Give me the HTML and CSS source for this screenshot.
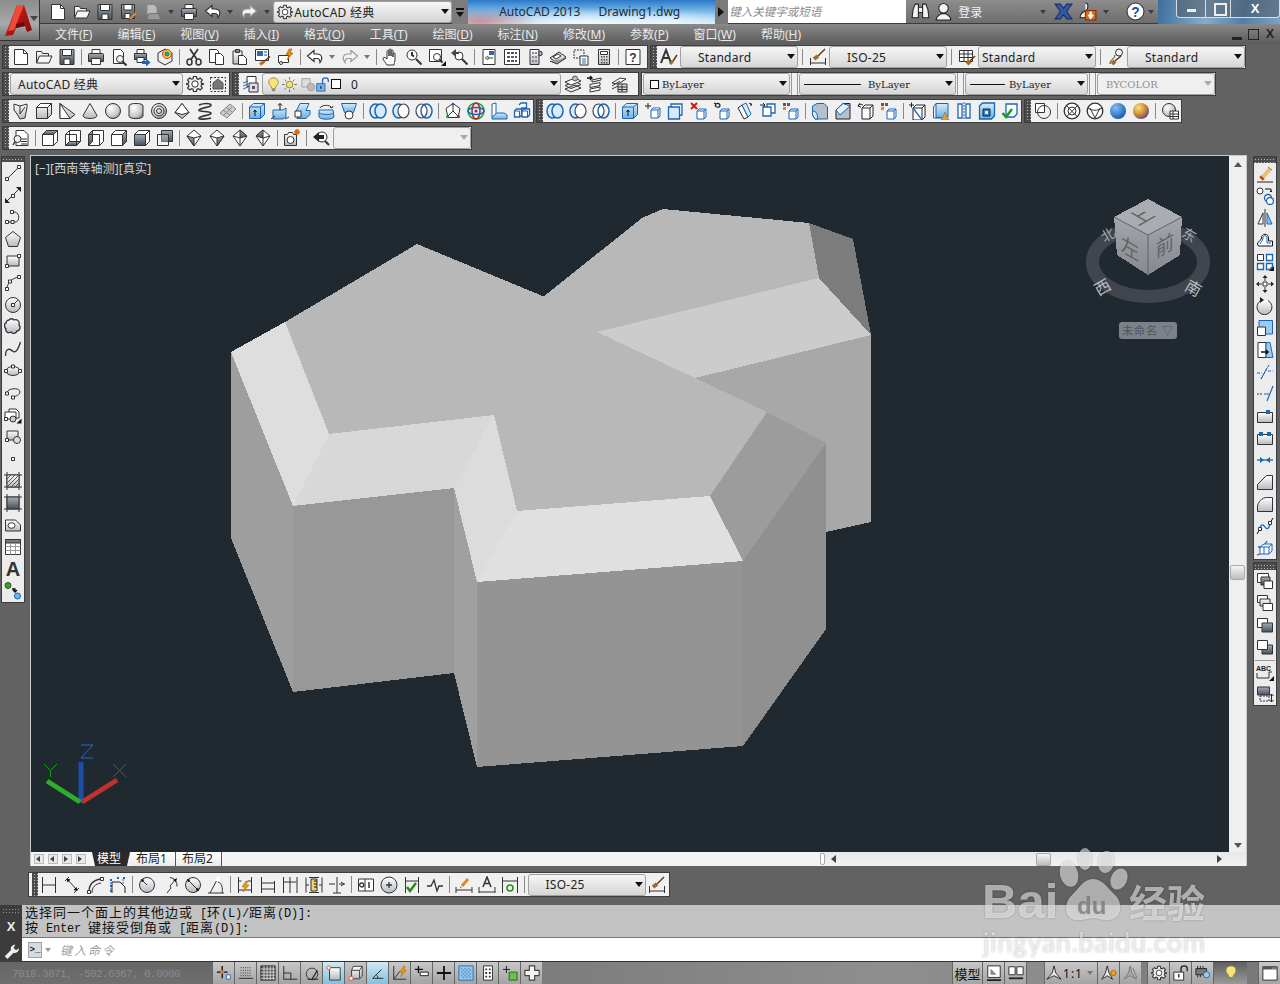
FILE: index.html
```html
<!DOCTYPE html>
<html lang="zh-CN">
<head>
    <meta charset="UTF-8">
    <title>AutoCAD 2013 - Drawing1.dwg</title>
    <link rel="stylesheet" href="styles.css">
</head>
<body>
<svg class="sprite" width="0" height="0">
    <defs>
        <linearGradient id="gl" x1="0" y1="0" x2="0" y2="1"><stop offset="0" stop-color="#fff"/><stop offset="1" stop-color="#b4bac1"/></linearGradient>
        <linearGradient id="gd" x1="0" y1="0" x2="0" y2="1"><stop offset="0" stop-color="#a5acb4"/><stop offset="1" stop-color="#465059"/></linearGradient>
        <linearGradient id="gb" x1="0" y1="0" x2="0" y2="1"><stop offset="0" stop-color="#d5ecfb"/><stop offset="1" stop-color="#6fb0e0"/></linearGradient>
        <linearGradient id="gcube" x1="0" y1="0" x2="0" y2="1"><stop offset="0" stop-color="#a3a7ab"/><stop offset="1" stop-color="#85898d"/></linearGradient>
        <radialGradient id="gs" cx=".35" cy=".3" r=".8"><stop offset="0" stop-color="#fff"/><stop offset=".7" stop-color="#c4c8cc"/><stop offset="1" stop-color="#7d8489"/></radialGradient>
        <radialGradient id="gblue" cx=".35" cy=".3" r=".8"><stop offset="0" stop-color="#7fc0f5"/><stop offset="1" stop-color="#0c55a5"/></radialGradient>
        <radialGradient id="ggold" cx=".35" cy=".3" r=".8"><stop offset="0" stop-color="#ffe27a"/><stop offset=".55" stop-color="#c98a30"/><stop offset="1" stop-color="#4a3aa0"/></radialGradient>
        <linearGradient id="gred" x1="0" y1="0" x2="1" y2="1"><stop offset="0" stop-color="#e02020"/><stop offset="1" stop-color="#7d0c0c"/></linearGradient>

        <!-- file / edit -->
        <symbol id="new" viewBox="0 0 18 18"><path fill="#fff" d="M2.5 1.5h9l4 4v11h-13z"/><path d="M11.5 1.5v4h4"/></symbol>
        <symbol id="open" viewBox="0 0 18 18"><path fill="url(#gl)" d="M1.5 15V3.5h5l1 2h6V8"/><path fill="#f5f5f5" d="M1.5 15l3-7h12.5l-3 7z"/></symbol>
        <symbol id="save" viewBox="0 0 18 18"><path fill="url(#gd)" d="M2 1.5h14v15H2z"/><path fill="#fff" d="M4.5 1.5h9v6h-9zM6 11h6v5.5H6z"/></symbol>
        <symbol id="saveas" viewBox="0 0 18 18"><path fill="url(#gd)" d="M1.5 1.5h13v14h-13z"/><path fill="#fff" d="M4 1.5h8v5.500H4zM5 10.500h5v5H5z"/><path stroke="#e08a20" stroke-width="2.400" d="M10 16l6-6"/><path stroke="#333" d="M9 17.500l1.500-1"/></symbol>
        <symbol id="plot" viewBox="0 0 18 18"><path fill="#bbb" stroke="#888" d="M3 1.500h7l3 3v7H3z"/><path fill="#999" stroke="#777" d="M3 16.500l2-6h9l3 6z"/></symbol>
        <symbol id="print" viewBox="0 0 18 18"><path fill="#fff" d="M5 1.500h8v5H5z"/><path fill="url(#gd)" d="M1.500 6.500c0-1 .5-1 1-1h13c.5 0 1 0 1 1v7h-15z"/><path fill="#fff" d="M4.500 10.500h9v6h-9z"/></symbol>
        <symbol id="preview" viewBox="0 0 18 18"><path fill="#fff" d="M3.500 1.500h7l3 3v11h-10z"/><circle cx="10" cy="11" r="3.500" fill="#eaf4fb"/><path stroke-width="2" d="M12.500 13.500l4 4"/></symbol>
        <symbol id="publish" viewBox="0 0 18 18"><path fill="#fff" d="M4 1.500h7v4H4z"/><path fill="url(#gd)" d="M1.500 5.500h12v6h-12z"/><path fill="#fff" d="M4 9.500h7v5H4z"/><path fill="#1a66b5" stroke="none" d="M9 13h4v-2.500l4.500 4-4.500 4V16H9z"/></symbol>
        <symbol id="p3d" viewBox="0 0 18 18"><path fill="#eee" d="M9 1l7 4v8l-7 4-7-4V5z"/><circle cx="11" cy="6" r="4.500" fill="#f5d040" stroke="#e03820"/><circle cx="11" cy="6" r="2" fill="#3090d8" stroke="#148a30"/></symbol>
        <symbol id="cut" viewBox="0 0 18 18"><ellipse cx="4.500" cy="14" rx="2.500" ry="3" stroke-width="1.500"/><ellipse cx="13.500" cy="14" rx="2.500" ry="3" stroke-width="1.500"/><path stroke-width="1.700" d="M6 11.500L13 1M12 11.500L5 1"/></symbol>
        <symbol id="copy" viewBox="0 0 18 18"><path fill="#fff" d="M1.500 1.500h7l2 2v11h-9z"/><path fill="#fff" d="M7.500 5.500h5l3 3v8h-8z"/></symbol>
        <symbol id="paste" viewBox="0 0 18 18"><path fill="url(#gl)" d="M2 3h9v13H2z"/><path fill="#888" d="M4.500 1.500h4v3h-4z"/><path fill="#fff" d="M7.500 7.500h5l3 3v6h-8z"/></symbol>
        <symbol id="match" viewBox="0 0 18 18"><path fill="#fff" stroke="#234" d="M1.500 1.500h13v11h-13z"/><path fill="#3a66a8" stroke="none" d="M3 3h6v5H3z"/><path fill="#8ab" stroke="none" d="M10 3h3v2h-3zM10 6h3v2h-3z"/><path stroke="#c56a18" stroke-width="3" d="M6 16.500l4-3"/><path stroke="#6a3a10" stroke-width="1.500" d="M10 13.500l6-5"/></symbol>
        <symbol id="block" viewBox="0 0 18 18"><path fill="#fff" d="M1.500 7.500h10v7h-10z"/><circle cx="4" cy="15" r="1.500" fill="#fff"/><path fill="#e88a10" stroke="#a85a00" stroke-width=".6" d="M12 1l-3 6h3l-2 5 6-7h-3l2-4z"/></symbol>
        <symbol id="undo" viewBox="0 0 18 18"><path fill="#fff" stroke-width="1.200" d="M8 2.500L1.500 8 8 13.500v-3h3c2.500 0 3 1.500 3 4 2.500-2.500 3-8.500-3-8.500H8z"/></symbol>
        <symbol id="redo" viewBox="0 0 18 18"><path fill="#f4f4f4" stroke="#999" stroke-width="1.200" d="M10 2.500L16.500 8 10 13.500v-3H7c-2.500 0-3 1.500-3 4-2.500-2.500-3-8.500 3-8.500h3z"/></symbol>
        <symbol id="pan" viewBox="0 0 18 18"><path fill="#fff" d="M5 17c-1-2-4-5-4-6.500S3 9 5 11V3.500c0-1.500 2-1.500 2 0V8 2c0-1.500 2-1.500 2 0v6-5c0-1.500 2-1.500 2 0v6-3c0-1.500 2-1.500 2 0v5c0 3-1 4-1 6z"/></symbol>
        <symbol id="zr" viewBox="0 0 18 18"><circle cx="7" cy="7" r="5" fill="#fff"/><path stroke-width="2" d="M11 11l5.500 5.500M7 4v3l2 1.500"/></symbol>
        <symbol id="zw" viewBox="0 0 18 18"><path fill="#fff" d="M1.500 1.500h12v12h-12z"/><circle cx="9" cy="9" r="3.500" fill="#fff"/><path stroke-width="2" d="M11.500 11.500l3 3"/><path fill="#111" stroke="none" d="M18 18h-5l5-5z"/></symbol>
        <symbol id="zp" viewBox="0 0 18 18"><circle cx="8" cy="8" r="4" fill="#fff"/><path stroke-width="2" d="M11 11l5.500 5.500"/><path fill="#445" stroke="none" d="M0 5l5-4v3h3v2H5v3z"/></symbol>
        <symbol id="props" viewBox="0 0 18 18"><path fill="#fff" d="M3 1.500h12v15H3z"/><path fill="#3a66a8" stroke="none" d="M9 3h5v4H9z"/><path fill="#fff" stroke-width=".7" d="M5 10l3-2v4z"/><path d="M8 10h5"/></symbol>
        <symbol id="dc" viewBox="0 0 18 18"><path fill="#fff" d="M1.500 1.500h15v15h-15z"/><path fill="#555" stroke="none" d="M4 4h3v2H4zM8 4h3v2H8zM12 4h2v2h-2zM4 8h3v2H4zM12 8h2v2h-2zM4 12h3v2H4zM8 12h3v2H8zM12 12h2v2h-2z"/><path fill="#2f6eb5" stroke="none" d="M8 8h3v2H8z"/></symbol>
        <symbol id="pal" viewBox="0 0 18 18"><path fill="url(#gl)" d="M4 1.500h9v15H4z"/><path fill="#889" stroke="none" d="M6 4h2v2H6zM9 4h2v2H9zM6 8h2v2H6zM9 8h2v2H9zM6 12h2v2H6zM9 12h2v2H9z"/><path fill="#bbb" d="M13 3l3 1v3l-3 1z"/></symbol>
        <symbol id="sheet" viewBox="0 0 18 18"><path fill="#ddd" d="M1 10l9-6 7 5-9 6z"/><path fill="#999" d="M1 13l7 3 9-6"/><path fill="#fff" d="M4 9l5-3 3 2-5 3z"/></symbol>
        <symbol id="markup" viewBox="0 0 18 18"><path fill="#eee" stroke-dasharray="2 1" d="M2 2h10v8H2z"/><path fill="#fff" d="M8 8h8v9H8z"/><path stroke="#2f6eb5" d="M10 11h4M10 13h4M10 15h4"/></symbol>
        <symbol id="calc" viewBox="0 0 18 18"><path fill="url(#gl)" d="M3.500 1.500h11v15h-11z"/><path fill="#fff" d="M5.500 3.500h7v3h-7z"/><path fill="#555" stroke="none" d="M6 8h1.500v1.500H6zM8.500 8H10v1.500H8.500zM11 8h1.500v1.500H11zM6 11h1.500v1.500H6zM8.500 11H10v1.500H8.500zM11 11h1.500v1.500H11zM6 14h1.500v1.500H6zM8.500 14H10v1.500H8.500zM11 14h1.500v1.500H11z"/></symbol>
        <symbol id="help" viewBox="0 0 18 18"><path fill="#fff" d="M2 1.500h14v15H2z"/><text x="9" y="14" font-size="12" font-family="Liberation Sans" font-weight="700" text-anchor="middle" fill="#333" stroke="none">?</text></symbol>

        <!-- style toolbar -->
        <symbol id="txtst" viewBox="0 0 18 18"><path stroke-width="2" d="M1 15L6 2l5 13M3 10h6"/><path stroke="#a86a20" stroke-width="3" d="M10 16l3-3"/><path stroke="#5a3a10" stroke-width="1.500" d="M13 13l4-6"/></symbol>
        <symbol id="dimst" viewBox="0 0 18 18"><path d="M1.500 10v7M16.500 10v7M1.500 15h15"/><path stroke="#a86a20" stroke-width="4" d="M5 11l4-3"/><path stroke="#5a3a10" stroke-width="1.500" d="M9 8l7-7"/></symbol>
        <symbol id="tabst" viewBox="0 0 18 18"><path fill="#fff" d="M1.500 2.500h13v11h-13z"/><path d="M1.500 6h13M1.500 9.500h13M6 2.500v11M10 2.500v11"/><path stroke="#a86a20" stroke-width="4" d="M9 16l3-3"/><path stroke="#5a3a10" stroke-width="1.500" d="M12 13l5-5"/></symbol>
        <symbol id="mlst" viewBox="0 0 18 18"><path d="M3 16c0-5 4-4 5-9"/><circle cx="12" cy="4.500" r="3.500"/><path stroke="#a86a20" stroke-width="4" d="M5 16l3-3"/><path stroke="#5a3a10" stroke-width="1.500" d="M8 13l6-5"/></symbol>
        <symbol id="gear" viewBox="0 0 18 18"><circle cx="9" cy="9" r="3.200" fill="#fff"/><path stroke-width="1.200" fill="#eee" d="M7.500 1.500h3l.4 2.200 1.500.6 1.800-1.300 2.100 2.100-1.300 1.800.6 1.500 2.200.4v.4l-2.200.4-.6 1.500 1.300 1.800-2.100 2.100-1.800-1.300-1.500.6-.4 2.200h-3l-.4-2.200-1.500-.6-1.800 1.300L1.600 13l1.300-1.800-.6-1.500L.1 9.300v-.6l2.200-.4.6-1.500L1.600 5l2.100-2.100 1.800 1.300L7 3.700z"/><circle cx="9" cy="9" r="3.200" fill="#fff"/></symbol>
        <symbol id="wsp" viewBox="0 0 18 18"><path stroke-dasharray="2 1.500" d="M1.500 2.500h15v14h-15z"/><path fill="#777" stroke="#555" d="M4 14V8l5-4 5 4v6z"/></symbol>
        <symbol id="layers" viewBox="0 0 18 18"><path fill="#fff" d="M5 1.500h9v10H5z"/><path stroke="#2f6eb5" d="M1 8l5-2M1 11l5-2M1 14l5-2"/><path fill="#dde" d="M7 8h9v9H7z"/><path fill="#555" stroke="none" d="M10 11h3v3h-3z"/></symbol>
        <symbol id="lay2" viewBox="0 0 18 18"><path fill="#eee" d="M1 14l6 3 10-4-6-3zM1 10.500l6 3 10-4-6-3z"/><path fill="#fff" d="M1 7l6 3 10-4-6-3z"/><circle cx="11" cy="3.500" r="2.500" fill="#9cc7ea" stroke="#555"/></symbol>
        <symbol id="lay3" viewBox="0 0 18 18"><path fill="#fff" d="M3 17l10-2v-3L3 14zM3 12.500l10-2v-3l-10 2z"/><path fill="#fff" d="M5 7l9-2V3L5 5z"/><path stroke="#111" stroke-width="1.400" d="M0 3h4M3 1l2 2-2 2"/></symbol>
        <symbol id="lay4" viewBox="0 0 18 18"><path fill="#fff" d="M2 8l8-5 6 1-8 5zM2 11l8-5M2 14l6-3"/><path fill="#ddd" d="M8 9h9v8H8z"/><path d="M8 12h9M8 14.500h9M12 9v8"/></symbol>

        <!-- solids -->
        <symbol id="polys" viewBox="0 0 18 18"><path fill="url(#gl)" d="M2 2l6 2 7-2v3l-2 11-5 1-3-5L2 8z"/><path d="M8 4v8M13 5l-5 7"/></symbol>
        <symbol id="box" viewBox="0 0 18 18"><path fill="url(#gl)" d="M1.500 5.500l4-4h11v11l-4 4h-11z"/><path fill="#fff" d="M1.500 5.500h11l4-4h-11zM12.500 5.500v11"/></symbol>
        <symbol id="wedge" viewBox="0 0 18 18"><path fill="url(#gl)" d="M2 1.500v15h10l5-4z"/><path fill="#fff" d="M2 1.500l10 15H2z"/></symbol>
        <symbol id="cone" viewBox="0 0 18 18"><path fill="url(#gl)" d="M9 1.500l7 12c0 4-14 4-14 0z"/></symbol>
        <symbol id="sphere" viewBox="0 0 18 18"><circle cx="9" cy="9" r="7.500" fill="url(#gs)"/></symbol>
        <symbol id="cyl" viewBox="0 0 18 18"><path fill="url(#gs)" d="M2 4c0-3.500 14-3.500 14 0v10c0 3.500-14 3.500-14 0z"/></symbol>
        <symbol id="torus" viewBox="0 0 18 18"><circle cx="9" cy="9" r="7.500" fill="url(#gs)"/><circle cx="9" cy="9" r="5"/><circle cx="9" cy="9" r="2.500" fill="#ddd"/></symbol>
        <symbol id="pyr" viewBox="0 0 18 18"><path fill="url(#gl)" d="M9 1.500l7 9-7 6-7-6z"/><path fill="#fff" d="M9 1.500l-7 9 7 2 7-2z"/></symbol>
        <symbol id="helix" viewBox="0 0 18 18"><path stroke-width="1.600" d="M3 3c5-2 11-2 12 0s-11 3-12 5 11 1 12 3-11 3-12 5 9 1 12 0"/></symbol>
        <symbol id="planar" viewBox="0 0 18 18"><path fill="#ccc" stroke="#888" d="M1 11l10-9 6 5-9 9z"/><path stroke="#888" d="M4 8l7 5M7 5l7 6M5 13l8-8"/></symbol>
        <symbol id="extr" viewBox="0 0 18 18"><path fill="url(#gb)" stroke="#1a66b5" d="M1.500 5l4-3.500h11v11l-4 4h-11z"/><path fill="none" stroke="#1a66b5" d="M1.500 5h11l4-3.500M12.500 5v11.500"/><path stroke="#111" d="M7 14V8M5.500 10L7 8l1.500 2"/></symbol>
        <symbol id="press" viewBox="0 0 18 18"><path fill="url(#gb)" stroke="#1a66b5" d="M2 8h10l3-2v9l-3 2H2z"/><path stroke="#111" d="M9 8V1.500M7 3.500l2-2 2 2"/><path d="M0 17l4-3M14 17l4-2"/></symbol>
        <symbol id="sweep" viewBox="0 0 18 18"><path fill="url(#gb)" stroke="#1a66b5" d="M6 1.500h9l-3 7h4v4l-4 4H3l3-7H2z"/><path fill="#fff" d="M1 9h6v6H1z"/></symbol>
        <symbol id="revo" viewBox="0 0 18 18"><path fill="none" stroke="#333" d="M3 6c1-3 10-4 12 0M15 6l1-2M15 6l-2-1"/><path fill="url(#gb)" stroke="#1a66b5" d="M2 8h14l1 7c-2 3-13 3-15 0z"/><path stroke="#1a66b5" d="M2 11c3 2 12 2 15 0"/></symbol>
        <symbol id="loft" viewBox="0 0 18 18"><path fill="url(#gb)" stroke="#1a66b5" d="M1.500 1.500h15l-3 9h-9z"/><circle cx="9" cy="13" r="4" fill="#fff"/></symbol>
        <symbol id="uni" viewBox="0 0 18 18"><ellipse cx="6.500" cy="9" rx="5.500" ry="7" fill="#d7ecfa" stroke="#1a66b5" stroke-width="1.500"/><ellipse cx="11.500" cy="9" rx="5.500" ry="7" fill="#d7ecfa" stroke="#1a66b5" stroke-width="1.500"/></symbol>
        <symbol id="sub" viewBox="0 0 18 18"><ellipse cx="6.500" cy="9" rx="5.500" ry="7" fill="#d7ecfa" stroke="#1a66b5" stroke-width="1.500"/><ellipse cx="11.500" cy="9" rx="5.500" ry="7" fill="#fff" stroke="#445" stroke-width="1.200"/></symbol>
        <symbol id="int" viewBox="0 0 18 18"><ellipse cx="6.500" cy="9" rx="5.500" ry="7" fill="#fff" stroke="#445" stroke-width="1.200"/><ellipse cx="11.500" cy="9" rx="5.500" ry="7" fill="none" stroke="#1a66b5" stroke-width="1.500"/></symbol>
        <symbol id="gizmo" viewBox="0 0 18 18"><path fill="#fff" d="M9 1.500l7 5-2 9H4L2 6.500z"/><path stroke="#333" d="M9 9V2M9 9l-5 5M9 9l5 5"/><circle cx="9" cy="2" r="1.300" fill="#1a66b5" stroke="none"/><circle cx="3.500" cy="14.500" r="1.500" fill="#1c9a30" stroke="none"/><circle cx="14.500" cy="14.500" r="1.500" fill="#c32020" stroke="none"/></symbol>
        <symbol id="rot3d" viewBox="0 0 18 18"><ellipse cx="9" cy="9" rx="8" ry="8" fill="#d7ecfa" stroke="#1c9a30" stroke-width="1.500"/><ellipse cx="9" cy="9" rx="4" ry="8" stroke="#c32020" stroke-width="1.500"/><ellipse cx="9" cy="9" rx="8" ry="3.500" stroke="#1a66b5" stroke-width="1.500"/><circle cx="9" cy="9" r="1.500" fill="#c32020" stroke="none"/></symbol>
        <symbol id="align" viewBox="0 0 18 18"><path fill="#fff" stroke="#1a66b5" d="M2 2l4-1v13l-4 1z"/><path fill="url(#gb)" stroke="#1a66b5" d="M2 15l5-4h7l3 2v4H2z"/></symbol>
        <symbol id="arr3d" viewBox="0 0 18 18"><path fill="#fff" stroke="#1a66b5" stroke-width="1.300" d="M1.500 9l2-2h5v6l-2 2h-5zM9 9l2-2h5.500v6l-2 2H9zM6 3l2-2h5.500v5H8"/><path stroke="#1a66b5" d="M1.500 9h5v6M9 9h5.500v6"/></symbol>
        <symbol id="fbox" viewBox="0 0 18 18"><path fill="#fff" stroke="#1a66b5" d="M7 8l2-2h7v8l-2 2H7z"/><path fill="#fff" stroke="#1a66b5" d="M7 8h7l2-2M14 8v8"/><path stroke="#222" d="M1 4h6M4 1v6"/></symbol>
        <symbol id="ftwin" viewBox="0 0 18 18"><path fill="#fff" stroke="#1a66b5" stroke-width="1.300" d="M4 2h11v11H4z"/><path fill="#d7ecfa" stroke="#1a66b5" stroke-width="1.300" d="M1.500 5h11v12h-11z"/></symbol>
        <symbol id="fdel" viewBox="0 0 18 18"><path fill="#fff" stroke="#1a66b5" d="M7 9l2-2h7v8l-2 2H7z"/><path stroke="#1a66b5" d="M7 9h7l2-2M14 9v8"/><path stroke="#c81818" stroke-width="2" d="M1 1l6 6M7 1L1 7"/></symbol>
        <symbol id="frot" viewBox="0 0 18 18"><path fill="#fff" stroke="#1a66b5" d="M7 9l2-2h7v8l-2 2H7z"/><path stroke="#1a66b5" d="M7 9h7l2-2M14 9v8"/><path stroke="#222" stroke-width="1.200" d="M2 3c1 3 5 3 5 0-1-2-3-2-4-1M1 1l2 1-1 2"/></symbol>
        <symbol id="ftap" viewBox="0 0 18 18"><path fill="#fff" stroke="#223" d="M2 6l4-3 6 12-4 2z"/><path fill="#d7ecfa" stroke="#1a66b5" d="M6 3l4-2 5 11-3 3z"/><path stroke="#222" d="M13 1l3 2M15 1v3"/></symbol>
        <symbol id="fcopy" viewBox="0 0 18 18"><path fill="#fff" stroke="#1a66b5" stroke-width="1.300" d="M8 2h8v9H8z"/><path fill="#fff" stroke="#1a66b5" stroke-width="1.300" d="M4 5h8v9H4z"/><path stroke="#222" d="M1 3h5M4 1L6 3 4 5"/></symbol>
        <symbol id="fcol" viewBox="0 0 18 18"><path fill="#fff" stroke="#1a66b5" d="M7 9l2-2h7v8l-2 2H7z"/><path stroke="#1a66b5" d="M7 9h7l2-2M14 9v8"/><path fill="#c03030" stroke="none" d="M1 1h3v3H1z"/><path fill="#3060c0" stroke="none" d="M5 1h3v3H5z"/><path fill="#e08a20" stroke="none" d="M1 5h3v3H1z"/></symbol>
        <symbol id="eshade" viewBox="0 0 18 18"><path fill="#b4c0cc" stroke="#1a66b5" d="M1.500 4L6 1.500h7L16.500 5v12H4L1.500 13z"/><path fill="#d7ecfa" stroke="#1a66b5" d="M1.500 4v5c4 0 5 3 5 8H4L1.500 13z"/></symbol>
        <symbol id="eoff" viewBox="0 0 18 18"><path fill="#b4c0cc" stroke="#223" d="M9 1.500h7V17H2V8z"/><path fill="#e4f0fa" stroke="#1a66b5" d="M9 1.500L2 8l4 5 10-9z"/></symbol>
        <symbol id="ecopy" viewBox="0 0 18 18"><path fill="#fff" stroke="#223" d="M5 6l3-3h8v11l-3 3H5z"/><path stroke="#223" d="M5 6h8l3-3M13 6v11"/><path stroke="#222" d="M1 4c1-2 3-2 5-1M3 1L1 4l3 1"/></symbol>
        <symbol id="imprint" viewBox="0 0 18 18"><path fill="#fff" stroke="#223" d="M4 6l3-3h9v12l-3 3H4z"/><path stroke="#223" d="M4 6h9l3-3M13 6v12"/><path stroke="#1a66b5" stroke-width="1.300" d="M4 6l9 12"/><path stroke="#222" d="M0 3h5M2.500 .5v5"/></symbol>
        <symbol id="clean" viewBox="0 0 18 18"><path fill="url(#gb)" stroke="#1a66b5" d="M4 1.500h12v14H4z"/><path stroke="#1a66b5" d="M1.500 5l2.500-3.500M1.500 5v11h8"/><path fill="#e9a020" stroke="#888" d="M11 15l2-5 2 5 2 3h-8z"/></symbol>
        <symbol id="sep3" viewBox="0 0 18 18"><path fill="#fff" stroke="#1a66b5" stroke-width="1.300" d="M3 2h4v14H3zM11 2h4v14h-4z"/><path stroke="#1a66b5" stroke-dasharray="2 1" d="M9 0v18"/></symbol>
        <symbol id="shell" viewBox="0 0 18 18"><path fill="url(#gb)" stroke="#1a66b5" stroke-width="1.300" d="M1.500 4l3-3h12v13l-3 3h-12z"/><path fill="#3a7ec5" stroke="#123" d="M5 7h7v7H5z"/><path fill="#d7ecfa" stroke="none" d="M7 9h3v3H7z"/></symbol>
        <symbol id="check" viewBox="0 0 18 18"><path fill="#fff" stroke="#1a66b5" stroke-width="1.300" d="M5 2h11v10l-3 3H5z"/><path fill="none" stroke="#1c9a30" stroke-width="2.500" d="M1.500 11l3.500 4 6-8"/></symbol>
        <symbol id="inter" viewBox="0 0 18 18"><path fill="#fff" d="M1.500 1.500h9v9h-9z"/><circle cx="10" cy="10" r="6.500"/></symbol>
        <symbol id="wire" viewBox="0 0 18 18"><circle cx="9" cy="9" r="7.800" fill="#fff" stroke-width="1.300"/><path d="M3 3c4 4 8 9 12 12M15 3C11 7 7 12 3 15"/><circle cx="9" cy="9" r="4"/></symbol>
        <symbol id="hidden" viewBox="0 0 18 18"><circle cx="9" cy="9" r="7.800" fill="#fff" stroke-width="1.300"/><path d="M2 6c5 3 9 3 14 0M4 6l5 10 5-10"/></symbol>
        <symbol id="conc" viewBox="0 0 18 18"><circle cx="9" cy="9" r="8" fill="url(#gblue)" stroke="none"/></symbol>
        <symbol id="real" viewBox="0 0 18 18"><circle cx="9" cy="9" r="8" fill="url(#ggold)" stroke="none"/></symbol>
        <symbol id="vsm" viewBox="0 0 18 18"><circle cx="8" cy="8" r="6.500" fill="url(#gs)"/><path fill="#fff" d="M9 9h8.500v8H9z"/><path d="M9 12h8.500M9 14.500h8.500M12 9v8"/></symbol>
        <symbol id="vw" viewBox="0 0 18 18"><path fill="#fff" d="M4 1.500h8l4 4v11H4z"/><circle cx="5.500" cy="10" r="3.500" fill="#eee"/><path d="M3 12.500L1 16" stroke-width="1.500"/><path d="M9 10h6M9 12.500h6M9 15h6"/></symbol>
        <symbol id="c1" viewBox="0 0 18 18"><path fill="#fff" d="M5.500 1.500h11v11l-4 4h-11v-11z"/><path fill="url(#gd)" d="M1.500 5.500l4-4h11l-4 4z"/><path d="M12.500 5.500v11M1.500 5.500h11"/></symbol>
        <symbol id="c2" viewBox="0 0 18 18"><path fill="#fff" d="M5.500 1.500h11v11l-4 4h-11v-11z"/><path fill="url(#gd)" d="M1.500 16.500l4-4h11l-4 4z"/><path d="M5.500 1.500v11M12.500 5.500v11M1.500 5.500h11"/></symbol>
        <symbol id="c3" viewBox="0 0 18 18"><path fill="#fff" d="M5.500 1.500h11v11l-4 4h-11v-11z"/><path fill="url(#gd)" d="M1.500 5.500l4-4v11l-4 4z"/><path d="M12.500 5.500v11M1.500 5.500h11"/></symbol>
        <symbol id="c4" viewBox="0 0 18 18"><path fill="#fff" d="M5.500 1.500h11v11l-4 4h-11v-11z"/><path fill="url(#gd)" d="M12.500 5.500l4-4v11l-4 4z"/><path d="M1.500 5.500h11v11"/></symbol>
        <symbol id="c5" viewBox="0 0 18 18"><path fill="url(#gd)" d="M1.500 5.500h11v11h-11z"/><path fill="#fff" d="M1.500 5.500l4-4h11l-4 4zM12.500 5.500l4-4v11l-4 4z"/></symbol>
        <symbol id="c6" viewBox="0 0 18 18"><path fill="url(#gd)" d="M5.500 1.500h11v11h-11z"/><path fill="#fff" fill-opacity=".3" d="M1.500 5.500h11v11h-11z"/></symbol>
        <symbol id="d1" viewBox="0 0 18 18"><path fill="#fff" d="M9 1l7 6-7 10-7-10z"/><path fill="url(#gd)" d="M2 7l7 2v8z"/><path d="M9 9l7-2"/></symbol>
        <symbol id="d2" viewBox="0 0 18 18"><path fill="#fff" d="M9 1l7 6-7 10-7-10z"/><path fill="url(#gd)" d="M16 7L9 9v8z"/><path d="M2 7l7 2"/></symbol>
        <symbol id="d3" viewBox="0 0 18 18"><path fill="#fff" d="M9 1l7 6-7 10-7-10z"/><path fill="url(#gd)" d="M9 1l7 6-7 2z"/><path d="M2 7l7 2v8"/></symbol>
        <symbol id="d4" viewBox="0 0 18 18"><path fill="#fff" d="M9 1l7 6-7 10-7-10z"/><path fill="url(#gd)" d="M9 1L2 7l7 2z"/><path d="M16 7L9 9v8"/></symbol>
        <symbol id="cam" viewBox="0 0 18 18"><path fill="url(#gl)" d="M1.500 5.500h3l1-2h4l1 2h3v11h-12z"/><circle cx="7.500" cy="11" r="3.500" fill="#fff"/><path stroke="#e06a10" stroke-width="1.500" d="M14 0v6M11 3h6M12 1l4 4M16 1l-4 4"/></symbol>
        <symbol id="ucsb" viewBox="0 0 18 18"><circle cx="10" cy="8" r="5" fill="#fff"/><path stroke-width="2" d="M13 12l4 4"/><path fill="#222" stroke="none" d="M1 8l6-5v3h5v4H7v3z"/></symbol>

        <!-- draw / modify -->
        <symbol id="line" viewBox="0 0 18 18"><path d="M3 15L15 3"/><path fill="#fff" d="M1.500 13.500h3v3h-3zM13.500 1.500h3v3h-3z"/></symbol>
        <symbol id="xline" viewBox="0 0 18 18"><path d="M3 15L15 3"/><path fill="#fff" d="M7.500 8.500h3v3h-3z"/><path fill="#222" stroke="none" d="M17 1v5l-5-5zM1 17v-5l5 5z"/></symbol>
        <symbol id="pline" viewBox="0 0 18 18"><path d="M3 14h8c5 0 5-9 0-10H8"/><path fill="#fff" d="M1.500 12.500h3v3h-3zM7 12.500h3v3H7zM6.500 2.500h3v3h-3z"/></symbol>
        <symbol id="pgon" viewBox="0 0 18 18"><path fill="url(#gl)" d="M9 1.500l7.500 6-3 9h-9l-3-9z"/></symbol>
        <symbol id="rect" viewBox="0 0 18 18"><path fill="url(#gl)" d="M3 4h12v10H3z"/><path fill="#fff" d="M1.500 12.500h3v3h-3zM13.500 2.500h3v3h-3z"/></symbol>
        <symbol id="arc" viewBox="0 0 18 18"><path d="M3 15c0-6 5-11 12-12"/><path fill="#fff" d="M1.500 13.500h3v3h-3zM4.500 6h3v3h-3zM13.500 1.500h3v3h-3z"/></symbol>
        <symbol id="circ" viewBox="0 0 18 18"><circle cx="9" cy="9" r="7.500" fill="url(#gl)"/><path d="M9 9l5-5"/><path fill="#fff" d="M7.500 7.500h3v3h-3z"/></symbol>
        <symbol id="cloud" viewBox="0 0 18 18"><path fill="url(#gl)" stroke-width="1.300" d="M5 2c2-2 4-1 5 0 3-1 6 1 5 5 2 2 1 6-2 6-1 3-5 3-6 1-3 2-6-1-5-3C0 9 0 5 2 5c0-2 2-3 3-3z"/></symbol>
        <symbol id="spline" viewBox="0 0 18 18"><path stroke-width="1.300" d="M1.500 16c0-9 5-7 7-5s5 1 8-9"/></symbol>
        <symbol id="ell" viewBox="0 0 18 18"><ellipse cx="9" cy="9" rx="7" ry="4.500" fill="url(#gl)"/><path fill="#fff" d="M.5 7.500h3v3h-3zM14.500 7.500h3v3h-3zM7.500 3h3v3h-3z"/></symbol>
        <symbol id="earc" viewBox="0 0 18 18"><path d="M3 9c0-5 13-6 13-1 0 3-4 4-7 5"/><path fill="#fff" d="M1.500 8h3v3h-3zM7.500 12h3v3h-3z"/></symbol>
        <symbol id="ins" viewBox="0 0 18 18"><path fill="#fff" d="M5 3h7l3 3v6H5z"/><path fill="#fff" d="M1 6h11v7H1z"/><circle cx="9" cy="13" r="3" fill="#ccc"/><path fill="#fff" d="M.5 11.500h3v3h-3z"/><path fill="#111" stroke="none" d="M17.500 17.500h-5l5-5z"/></symbol>
        <symbol id="mkblk" viewBox="0 0 18 18"><path fill="url(#gl)" d="M3 3h11v9H3z"/><circle cx="13" cy="12" r="3.500" fill="#ddd"/><path fill="#fff" d="M1.500 10.500h3v3h-3z"/></symbol>
        <symbol id="point" viewBox="0 0 18 18"><path fill="#fff" d="M7.500 7.500h3v3h-3z"/></symbol>
        <symbol id="hatch" viewBox="0 0 18 18"><path d="M3 0v18M15 0v18M0 3h18M0 15h18"/><path fill="url(#gl)" d="M3 3h12v12H3z"/><path stroke="#555" d="M3 7l4-4M3 11l8-8M3 15L15 3M7 15l8-8M11 15l4-4"/></symbol>
        <symbol id="grad" viewBox="0 0 18 18"><path d="M3 0v18M15 0v18M0 3h18M0 15h18"/><path fill="url(#gd)" d="M3 3h12v12H3z"/></symbol>
        <symbol id="region" viewBox="0 0 18 18"><path fill="url(#gl)" d="M1.500 4h10l5 5v6h-15z"/><ellipse cx="7.500" cy="9.500" rx="3.500" ry="2.800" fill="#fff"/></symbol>
        <symbol id="table" viewBox="0 0 18 18"><path fill="#fff" d="M1.500 1.500h15v15h-15z"/><path fill="#777" d="M1.500 1.500h15v3.500h-15z"/><path stroke="#999" d="M1.500 8.500h15M1.500 12.500h15M6.500 5v11.500M11.500 5v11.500"/></symbol>
        <symbol id="addsel" viewBox="0 0 18 18"><circle cx="4" cy="3.500" r="3" fill="#4a9a30" stroke="#246010"/><path stroke="#111" stroke-width="1.300" d="M8 7h3v3M9 8l2 2 2-2"/><circle cx="13.500" cy="14" r="3" fill="#6cb6ee" stroke="#1a66b5"/></symbol>
        <symbol id="erase" viewBox="0 0 18 18"><path stroke="#222" d="M1 17h16"/><path stroke="#c04a10" stroke-width="5" d="M5 14l2-2"/><path stroke="#e8c070" stroke-width="4" d="M7 12l7-8"/><path stroke="#777" stroke-width="1" d="M12 2l4 3"/></symbol>
        <symbol id="mcopy" viewBox="0 0 18 18"><circle cx="4" cy="4" r="3" fill="#fff"/><circle cx="12" cy="11" r="3.500" fill="#fff" stroke="#1a66b5" stroke-width="1.300"/><circle cx="14" cy="14" r="3.500" fill="#fff" stroke="#1a66b5" stroke-width="1.300"/><path stroke="#111" d="M9 2h6v3M14 4l1 1 1-1"/></symbol>
        <symbol id="mirror" viewBox="0 0 18 18"><path d="M9 0v18"/><path fill="#fff" d="M7 4v11H2z"/><path fill="#8cc4ee" stroke="#1a66b5" d="M11 4v11h5z"/></symbol>
        <symbol id="offs" viewBox="0 0 18 18"><path fill="#fff" stroke="#111" d="M1.500 13c0-3 4-3 4-6 0-5 7-5 7 0v3h4v5h-14z"/><path stroke="#1a66b5" d="M4 13c0-1 3-3 3-6 0-3 4-3 4 0v5h4"/></symbol>
        <symbol id="marr" viewBox="0 0 18 18"><path fill="#fff" stroke="#333" d="M1.500 1.500h6v6h-6z"/><path fill="#fff" stroke="#1a66b5" stroke-width="1.300" d="M10.500 1.500h6v6h-6zM1.500 10.500h6v6h-6zM10.500 10.500h6v3l-3 3h-3z"/><path fill="#111" stroke="none" d="M18 18h-5l5-5z"/></symbol>
        <symbol id="move" viewBox="0 0 18 18"><path fill="#fff" d="M7 7h4v4H7z"/><path fill="#222" stroke="none" d="M9 0l2.500 3h-5zM9 18l2.500-3h-5zM0 9l3-2.500v5zM18 9l-3-2.500v5z"/><path d="M9 3v3M9 12v3M3 9h3M12 9h3"/></symbol>
        <symbol id="rot" viewBox="0 0 18 18"><path fill="url(#gl)" d="M12 3.500a7.500 7.500 0 1 1-7 0"/><path fill="#222" stroke="none" d="M8 3l-4-3v6z"/></symbol>
        <symbol id="scale" viewBox="0 0 18 18"><path fill="#9ccbeb" stroke="#1a66b5" d="M3 1.500h13.500V15H3z"/><path fill="#fff" stroke="#333" d="M1.500 8h8v8.500h-8z"/></symbol>
        <symbol id="stretch" viewBox="0 0 18 18"><path fill="#fff" d="M2 1.500h8v15H2z"/><path fill="#9ccbeb" stroke="#1a66b5" d="M10 1.500h4l3 15h-7z"/><path stroke="#111" stroke-width="1.500" d="M5 11h7M10 9l2 2-2 2"/></symbol>
        <symbol id="trim" viewBox="0 0 18 18"><path stroke="#1a66b5" d="M1 10h5M12 8h5M13 2L5 16" stroke-dasharray="3 1.500"/><path stroke="#1a66b5" d="M5 16L11 5"/></symbol>
        <symbol id="ext2" viewBox="0 0 18 18"><path stroke="#333" d="M1 9h6" stroke-dasharray="2 1"/><path stroke="#1a66b5" d="M8 9h5M17 1L11 16" stroke-width="1.200"/></symbol>
        <symbol id="brkp" viewBox="0 0 18 18"><path fill="url(#gl)" d="M1.500 5.500h15v10h-15z"/><path fill="#1a66b5" stroke="none" d="M10 3h4v4h-4z"/></symbol>
        <symbol id="brk" viewBox="0 0 18 18"><path fill="url(#gl)" d="M1.500 5.500h15v10h-15z"/><path fill="#1a66b5" stroke="none" d="M3 3h4v4H3zM11 3h4v4h-4z"/></symbol>
        <symbol id="join" viewBox="0 0 18 18"><path stroke="#1a66b5" stroke-width="1.300" d="M1 9h16"/><path fill="#1a66b5" stroke="none" d="M4 6l4 3-4 3zM14 6l-4 3 4 3z"/></symbol>
        <symbol id="cham" viewBox="0 0 18 18"><path fill="url(#gl)" d="M1.500 16.500v-5l9-9h6v14z"/></symbol>
        <symbol id="fillet" viewBox="0 0 18 18"><path fill="url(#gl)" d="M1.500 16.500V12c0-5 5-9.500 9-9.500h6v14z"/></symbol>
        <symbol id="blend" viewBox="0 0 18 18"><path stroke="#111" d="M1 17l3-5M14 6l3-5"/><path stroke="#1a66b5" stroke-width="1.300" d="M4 11c1-4 3-4 5-1s4 2 5-3"/><path fill="#fff" d="M2.500 10.500h3v3h-3zM12.500 4.500h3v3h-3z"/></symbol>
        <symbol id="explode" viewBox="0 0 18 18"><path fill="#fff" stroke="#1a66b5" d="M4 8l4-3h8v7l-3 3H4z"/><path stroke="#1a66b5" d="M4 8h9l3-3M13 8v7M8 8v7"/><path stroke="#1a66b5" stroke-width="1.300" d="M1 16l3-1M2 8l2 0M9 5l2-3"/></symbol>
        <symbol id="ord1" viewBox="0 0 18 18"><path fill="#fff" d="M1.500 1.500h11v9h-11z"/><path fill="url(#gd)" d="M5 5h9v8H5z"/><path fill="#fff" d="M8 9h8.500v7.500H8z"/></symbol>
        <symbol id="ord2" viewBox="0 0 18 18"><path fill="#fff" d="M1.500 1.500h10v7h-10z"/><path fill="url(#gl)" d="M4 5h10v7H4z"/><path fill="#fff" d="M7 9.500h9.500v7H7z"/></symbol>
        <symbol id="ord3" viewBox="0 0 18 18"><path fill="#fff" d="M1.500 2.500h10v9h-10z"/><path fill="url(#gd)" d="M6 7h10.500v9H6z"/></symbol>
        <symbol id="ord4" viewBox="0 0 18 18"><path fill="url(#gd)" d="M6 7h10.500v9H6z"/><path fill="#fff" d="M1.500 2.500h10v9h-10z"/></symbol>
        <symbol id="abc" viewBox="0 0 18 18"><text x="0" y="8" font-size="7" font-family="Liberation Sans" font-weight="700" fill="#222" stroke="none">ABC</text><path d="M1 10v5h12V9h3"/><path fill="#111" stroke="none" d="M18 18h-5l5-5z"/></symbol>
        <symbol id="ras" viewBox="0 0 18 18"><path fill="url(#gd)" d="M1.500 2h12v8h-12z"/><path stroke-dasharray="2 1" d="M4 11h9v5H4z"/><path stroke="#222" d="M15.500 9v8M13.500 11l2-2 2 2M13.500 15l2 2 2-2"/></symbol>

        <!-- dimensions -->
        <symbol id="dl" viewBox="0 0 18 18"><path d="M2.500 1v16M15.500 1v16M2.500 9h13"/></symbol>
        <symbol id="dal" viewBox="0 0 18 18"><path d="M2 5l4-4M11 17l5-5"/><path fill="#111" d="M4 3l10 11"/><path fill="#111" stroke="none" d="M3.500 2.500l4 1-3 3zM14.500 15l-4-1 3-3z"/></symbol>
        <symbol id="dar" viewBox="0 0 18 18"><path stroke-width="1.300" d="M3 16C3 9 7 4 15 3"/><path fill="#fff" d="M1.500 14.500h3v3h-3zM14.500 1.500h3v3h-3z"/><path d="M6 17c0-6 3-9 9-10"/></symbol>
        <symbol id="dor" viewBox="0 0 18 18"><path stroke="#222" d="M3 17V6h8l5 5v6"/><path fill="#1a66b5" stroke="none" d="M1 3h2v2H1zM1 9h2v2H1zM1 14h2v2H1zM8 1h2v2H8zM14 1h2v2h-2z"/><path stroke="#1a66b5" d="M2 6v8M14 3v6" stroke-dasharray="2 1"/></symbol>
        <symbol id="drad" viewBox="0 0 18 18"><circle cx="9" cy="9" r="7.500" fill="url(#gl)"/><path d="M9 9L4 4"/><path fill="#111" stroke="none" d="M3 3l3.500.8L3.800 6.500z"/></symbol>
        <symbol id="djog" viewBox="0 0 18 18"><path d="M9 1.500a8 8 0 0 1 7 9"/><path d="M15 3L9 10l1 2-4 5"/><path fill="#111" stroke="none" d="M16 2l-1 4-3-2z"/></symbol>
        <symbol id="ddia" viewBox="0 0 18 18"><circle cx="9" cy="9" r="7.500" fill="url(#gl)"/><path d="M4 4l10 10"/><path fill="#111" stroke="none" d="M3 3l3.500.8L3.800 6.500zM15 15l-3.500-.8 2.700-2.700z"/></symbol>
        <symbol id="dang" viewBox="0 0 18 18"><path d="M1 17h16M3 17l8-15"/><path d="M11 6c4 1 5 6 4 11"/><path fill="#fff" d="M9 1h4v4H9z" stroke="none"/></symbol>
        <symbol id="dqk" viewBox="0 0 18 18"><path d="M2.500 1v16M15.500 1v16M2.500 5h3M12 5h3.500M2.500 14h13"/><path fill="#e8a010" stroke="#a86a00" stroke-width=".6" d="M10 5L6 11h3l-2 5 6-7h-3l2-4z"/></symbol>
        <symbol id="dbase" viewBox="0 0 18 18"><path d="M2.500 1v16M15.500 5v12M2.500 7h13M2.500 13h13"/></symbol>
        <symbol id="dcont" viewBox="0 0 18 18"><path d="M1.500 1v16M8 1v16M15 1v16M1.500 6h13"/></symbol>
        <symbol id="dsp" viewBox="0 0 18 18"><path d="M4 1.500h10M4 16.500h10M1 1.500v15M17 1.500v15M1 9h3M14 9h3"/><path fill="#f0d070" d="M6 3h6v12H6z"/><path stroke="#111" d="M9 5h3M9 8h3M9 11h3"/></symbol>
        <symbol id="dbrk" viewBox="0 0 18 18"><path d="M9 1v16M5 17h8M1 8h6M11 8h6M13 6l3 2-3 2"/></symbol>
        <symbol id="tol" viewBox="0 0 18 18"><path fill="#fff" d="M1.500 3h15v12h-15z"/><path d="M8 3v12"/><circle cx="4.700" cy="9" r="2" stroke-width="1.300"/><path stroke-width="1.500" d="M12 6v6"/></symbol>
        <symbol id="cen" viewBox="0 0 18 18"><circle cx="9" cy="9" r="8" fill="url(#gl)"/><path stroke-width="1.300" d="M6 9h6M9 6v6"/></symbol>
        <symbol id="ins2" viewBox="0 0 18 18"><path d="M2.500 1v16M15.500 1v16M2.500 5h13"/><path fill="none" stroke="#2a8a1a" stroke-width="2.500" d="M4 11l3 4 6-8"/></symbol>
        <symbol id="jline" viewBox="0 0 18 18"><path stroke-width="1.300" d="M1 10h4l3-6 3 11 2-5h4"/></symbol>
        <symbol id="ded" viewBox="0 0 18 18"><path d="M1 11v6M17 11v6M1 14h16"/><path stroke="#e08a20" stroke-width="3" d="M7 10l6-7"/><path stroke="#555" d="M5 12l1.500-1"/></symbol>
        <symbol id="dtxt" viewBox="0 0 18 18"><path d="M1 11v6M17 11v6M1 16h16"/><path stroke-width="1.500" d="M5 11L9 1l4 10M6.500 7.500h5"/></symbol>
        <symbol id="dupd" viewBox="0 0 18 18"><path d="M1.500 1v16M16.500 1v16M1.500 5h15"/><circle cx="9" cy="12" r="3" stroke="#2a8a1a" stroke-width="1.500"/></symbol>

        <!-- status -->
        <symbol id="sinf" viewBox="0 0 18 18"><path stroke="#111" stroke-width="1.500" d="M7 1v14M1 8h12"/><path fill="#e08030" stroke="none" d="M5 6h4v4H5z"/><path fill="#fff" stroke="#1a66b5" d="M12 11h4v5h-4z"/></symbol>
        <symbol id="ssnap" viewBox="0 0 18 18"><path stroke="#222" stroke-dasharray="1 1.500" d="M3 3h12M3 6h12M3 9h12M3 12h12"/><path stroke="#222" d="M1 15h16"/></symbol>
        <symbol id="sgrid" viewBox="0 0 18 18"><path fill="#555" stroke="#222" d="M1 1h16v16H1z"/><path stroke="#ddd" d="M4.500 1v16M8 1v16M11.500 1v16M15 1v16M1 4.500h16M1 8h16M1 11.500h16M1 15h16"/></symbol>
        <symbol id="sortho" viewBox="0 0 18 18"><path stroke="#222" d="M2 1v15h15M2 9h8v7"/></symbol>
        <symbol id="spol" viewBox="0 0 18 18"><circle cx="9" cy="10" r="6.500"/><path stroke="#222" stroke-width="1.300" d="M4 16h12M9 16l6-10"/></symbol>
        <symbol id="sos" viewBox="0 0 18 18"><path fill="url(#gl)" d="M4 3h12v14H4z"/><circle cx="3" cy="3" r="2" fill="#fff" stroke="#e0501a"/></symbol>
        <symbol id="s3d" viewBox="0 0 18 18"><path fill="url(#gl)" d="M6 1.500h10v11l-3 3H4V6z"/><path d="M4 6h9l3-4.500M13 6v9"/><circle cx="3.500" cy="15" r="2.200" fill="#fff" stroke="#e0501a"/></symbol>
        <symbol id="sotr" viewBox="0 0 18 18"><path stroke="#222" d="M3 15h12M3 15L13 5M9 15c0-2-1-3-2-4"/></symbol>
        <symbol id="sdyn" viewBox="0 0 18 18"><path stroke="#222" d="M2 1v15h14M2 16L9 7"/><path fill="#e8a010" stroke="#a86a00" stroke-width=".6" d="M13 1l-4 7h3l-2 5 6-7h-3l2-4z"/></symbol>
        <symbol id="sdu" viewBox="0 0 18 18"><path stroke="#111" stroke-width="1.500" d="M1 5h9M5 1v8"/><path fill="#fff" stroke="#111" d="M7 8h9v4H7z"/></symbol>
        <symbol id="sdyn2" viewBox="0 0 18 18"><path stroke="#111" stroke-width="2" d="M9 1v16M1 9h16"/></symbol>
        <symbol id="slw" viewBox="0 0 18 18"><path fill="#9ccbeb" stroke="#1a66b5" d="M1 1h16v16H1z"/><path fill="#5d9bd0" stroke="none" d="M3 3h2v2H3zM7 3h2v2H7zM11 3h2v2h-2zM5 5h2v2H5zM9 5h2v2H9zM13 5h2v2h-2zM3 7h2v2H3zM7 7h2v2H7zM11 7h2v2h-2zM5 9h2v2H5zM9 9h2v2H9zM13 9h2v2h-2zM3 11h2v2H3zM7 11h2v2H7zM11 11h2v2h-2zM5 13h2v2H5zM9 13h2v2H9zM13 13h2v2h-2z"/></symbol>
        <symbol id="stp" viewBox="0 0 18 18"><path fill="#fff" stroke="#222" d="M4 1h10v16H4z"/><path fill="#333" stroke="none" d="M6 4h2v2H6zM10 4h2v2h-2zM6 8h2v2H6zM10 8h2v2h-2zM6 12h2v2H6zM10 12h2v2h-2z"/></symbol>
        <symbol id="ssel" viewBox="0 0 18 18"><path stroke="#111" d="M1 5h8M5 1v8"/><path fill="#6cbf4a" stroke="#246010" d="M8 8h9v9H8z"/></symbol>
        <symbol id="scross" viewBox="0 0 18 18"><path fill="#f4f4f4" stroke="#444" stroke-width="1.300" d="M6 1h6v5h5v6h-5v5H6v-5H1V6h5z"/></symbol>
        <symbol id="slay" viewBox="0 0 18 18"><path fill="#fff" stroke="#222" d="M2 1h14v13H2z"/><path fill="#888" stroke="none" d="M5 4v7h7z"/><path stroke="#222" stroke-width="2" d="M1 17h16"/></symbol>
        <symbol id="stwin" viewBox="0 0 18 18"><path fill="#fff" stroke="#222" d="M1 2h7v9H1zM10 2h7v9h-7z"/><path stroke="#222" stroke-width="2" d="M1 15h16"/></symbol>
        <symbol id="anno" viewBox="0 0 18 18"><path fill="#eee" stroke="#222" d="M9 1l2 8 6 7-8-4-8 4 6-7z"/></symbol>
        <symbol id="anno2" viewBox="0 0 18 18"><path fill="#eee" stroke="#222" d="M7 1l2 8 4 7-6-4-6 4 4-7z"/><circle cx="14" cy="9" r="3" fill="#f2a020" stroke="#a86a00"/></symbol>
        <symbol id="anno3" viewBox="0 0 18 18"><path fill="#aaa" stroke="#777" d="M8 1l2 8 5 7-7-4-7 4 5-7z"/><path fill="none" stroke="#777" d="M11 3l5 12"/></symbol>
        <symbol id="lock" viewBox="0 0 18 18"><path fill="#fff" stroke="#222" d="M1 8h11v9H1z"/><path stroke="#222" stroke-width="1.500" d="M9 8V4c0-4 7-4 7 0v3"/><path stroke="#222" stroke-width="1.500" d="M6.500 10v4"/></symbol>
        <symbol id="hw" viewBox="0 0 18 18"><path fill="#777" stroke="#222" d="M1 4h12v7H1z"/><path stroke="#222" d="M3 1v3M6 1v3M9 1v3M3 11v3M6 11v3"/><circle cx="13" cy="11" r="3.500" fill="#9ccbeb" stroke="#1a66b5"/></symbol>
        <symbol id="bulb" viewBox="0 0 18 18"><path fill="#f7e47a" stroke="#96803a" d="M9 1c-6 0-7 6-4 9 1 1 2 3 2 4h4c0-1 1-3 2-4 3-3 2-9-4-9z"/><path fill="#888" stroke="none" d="M7 14.500h4V17H7z"/></symbol>
        <symbol id="cleanscr" viewBox="0 0 18 18"><path fill="#fff" stroke="#222" d="M1 2h16v15H1z"/><path fill="#555" stroke="none" d="M1 2h16v3H1z"/><path stroke="#fff" d="M11 3.500h1M13 3.500h1M15 3.500h1"/></symbol>
        <symbol id="sun" viewBox="0 0 18 18"><circle cx="9" cy="9" r="4" fill="#f4e07a" stroke="#8a7a30"/><path stroke="#555" d="M9 0v3M9 15v3M0 9h3M15 9h3M3 3l2 2M13 13l2 2M15 3l-2 2M5 13l-2 2"/></symbol>
        <symbol id="frz" viewBox="0 0 18 18"><path fill="#ddd" stroke="#999" d="M1 2h10v10H1z"/><circle cx="12" cy="12" r="4.500" fill="#bbb" stroke="#999"/></symbol>
        <symbol id="unlock" viewBox="0 0 18 18"><path fill="#7ab5e0" stroke="#1a66b5" d="M2 8h10v9H2z"/><path stroke="#1a66b5" stroke-width="1.500" d="M9 8V4c0-4 7-4 7 0v2"/><path stroke="#123" stroke-width="1.500" d="M7 11v3"/></symbol>
    </defs>
</svg>

<header class="head">
    <div class="app-btn">
        <svg class="logo" viewBox="0 0 40 40">
            <path fill="url(#gred)" d="M5 36L17 5h7l8 25-5 2-2-6-9 2-3 7z"/>
            <path fill="#f04a3a" d="M17 5h7L14 30l-6 1z"/>
            <path fill="#6b0808" d="M16 24l8-2 1 4-9 2z"/>
            <path fill="#444" d="M30 16h8l-4 5z"/>
        </svg>
    </div>
    <div class="head-main">
        <div class="title">
            <svg class="ic first"><use href="#new"/></svg>
            <svg class="ic"><use href="#open"/></svg>
            <svg class="ic"><use href="#save"/></svg>
            <svg class="ic"><use href="#saveas"/></svg>
            <svg class="ic"><use href="#plot"/></svg>
            <i class="dd"></i>
            <svg class="ic"><use href="#print"/></svg>
            <svg class="ic"><use href="#undo"/></svg>
            <i class="dd"></i>
            <svg class="ic"><use href="#redo"/></svg>
            <i class="dd"></i>
            <div class="combo t-combo"><svg class="mini"><use href="#gear"/></svg><span>AutoCAD 经典</span></div>
            <div class="t-more"></div>
            <div class="banner"><span class="b-app">AutoCAD 2013</span><span class="b-doc">Drawing1.dwg</span></div>
            <div class="t-play"></div>
            <div class="search">键入关键字或短语</div>
            <svg class="bino" viewBox="0 0 18 18"><path fill="#f2f2f2" stroke="#222" d="M2 7l2-5h3v13H1zM16 7l-2-5h-3v13h6zM7 5h4v5H7z"/></svg>
            <svg class="user" viewBox="0 0 18 18"><circle cx="9" cy="6" r="4.500" fill="#f2f2f2" stroke="#222"/><path fill="#f2f2f2" stroke="#222" d="M2 17c0-4 3-4 5-6h4c2 2 5 2 5 6z"/></svg>
            <span class="login">登录</span>
            <i class="dd dd-a"></i>
            <svg class="xap" viewBox="0 0 18 18"><path fill="#3458a8" stroke="#1c2f60" d="M1 2h5l3 4 3-4h5l-5 7 5 7h-5l-3-4-3 4H1l5-7z"/></svg>
            <svg class="ex" viewBox="0 0 18 18"><path fill="#f0f0f0" stroke="#222" d="M7 1c3 0 3 4 1 7-3 1-6 3-6 7h5"/><path fill="#e06a14" stroke="#802c00" d="M7 8h10v9H7z"/><path stroke="#fff" stroke-width="2" d="M12 9v5M10 12l2 3 2-3"/></svg>
            <i class="dd"></i>
            <span class="t-sep"></span>
            <svg class="qm" viewBox="0 0 18 18"><circle cx="9" cy="9" r="8" fill="#fff" stroke="#333"/><text x="9" y="14" font-family="Liberation Sans" font-weight="700" font-size="13" text-anchor="middle" fill="#1a4fa8">?</text></svg>
            <i class="dd"></i>
            <div class="glass">
                <div class="win">
                    <b class="w-min"></b>
                    <b class="w-res"></b>
                    <b class="w-x">X</b>
                </div>
            </div>
        </div>
        <nav class="menu">
            <a>文件(<u>F</u>)</a><a>编辑(<u>E</u>)</a><a>视图(<u>V</u>)</a><a>插入(<u>I</u>)</a><a>格式(<u>O</u>)</a><a>工具(<u>T</u>)</a><a>绘图(<u>D</u>)</a><a>标注(<u>N</u>)</a><a>修改(<u>M</u>)</a><a>参数(<u>P</u>)</a><a>窗口(<u>W</u>)</a><a>帮助(<u>H</u>)</a>
            <div class="doc-ctl"><b class="d-min"></b><b class="d-res"></b><b class="d-x">X</b></div>
        </nav>
    </div>
</header>

<section class="docks">
    <div class="row">
        <div class="bar b-std">
            <i class="grip"></i>
            <svg class="ic"><use href="#new"/></svg><svg class="ic"><use href="#open"/></svg><svg class="ic"><use href="#save"/></svg>
            <i class="sep"></i>
            <svg class="ic"><use href="#print"/></svg><svg class="ic"><use href="#preview"/></svg><svg class="ic"><use href="#publish"/></svg><svg class="ic"><use href="#p3d"/></svg>
            <i class="sep"></i>
            <svg class="ic"><use href="#cut"/></svg><svg class="ic"><use href="#copy"/></svg><svg class="ic"><use href="#paste"/></svg><svg class="ic"><use href="#match"/></svg><svg class="ic"><use href="#block"/></svg>
            <i class="sep"></i>
            <svg class="ic"><use href="#undo"/></svg><i class="dd dk"></i><svg class="ic"><use href="#redo"/></svg><i class="dd dk"></i>
            <i class="sep"></i>
            <svg class="ic"><use href="#pan"/></svg><svg class="ic"><use href="#zr"/></svg><svg class="ic"><use href="#zw"/></svg><svg class="ic"><use href="#zp"/></svg>
            <i class="sep"></i>
            <svg class="ic"><use href="#props"/></svg><svg class="ic"><use href="#dc"/></svg><svg class="ic"><use href="#pal"/></svg><svg class="ic"><use href="#sheet"/></svg><svg class="ic"><use href="#markup"/></svg><svg class="ic"><use href="#calc"/></svg>
            <i class="sep"></i>
            <svg class="ic"><use href="#help"/></svg>
        </div>
        <div class="bar b-style">
            <i class="grip"></i>
            <svg class="ic"><use href="#txtst"/></svg>
            <div class="combo c-118 ctr"><span>Standard</span></div>
            <i class="sep"></i>
            <svg class="ic"><use href="#dimst"/></svg>
            <div class="combo c-118 ctr"><span>ISO-25</span></div>
            <i class="sep"></i>
            <svg class="ic"><use href="#tabst"/></svg>
            <div class="combo c-118"><span>Standard</span></div>
            <i class="sep"></i>
            <svg class="ic"><use href="#mlst"/></svg>
            <div class="combo c-118 ctr"><span>Standard</span></div>
        </div>
    </div>

    <div class="row">
        <div class="bar b-wsp">
            <i class="grip"></i>
            <div class="combo c-wsp"><span>AutoCAD 经典</span></div>
            <svg class="ic"><use href="#gear"/></svg><svg class="ic"><use href="#wsp"/></svg>
        </div>
        <div class="bar b-layer">
            <i class="grip"></i>
            <svg class="ic"><use href="#layers"/></svg>
            <div class="combo c-layer">
                <svg class="mini"><use href="#bulb"/></svg><svg class="mini"><use href="#sun"/></svg><svg class="mini m-frz"><use href="#frz"/></svg><svg class="mini m-lock"><use href="#unlock"/></svg><i class="swatch"></i><span>0</span>
            </div>
            <svg class="ic"><use href="#lay2"/></svg><svg class="ic"><use href="#lay3"/></svg><svg class="ic"><use href="#lay4"/></svg>
        </div>
        <div class="bar b-props">
            <div class="combo c-color"><i class="swatch sm"></i><span class="mono">ByLayer</span></div>
            <i class="grip2"></i>
            <div class="combo c-ltype"><i class="ln"></i><span class="mono">ByLayer</span></div>
            <i class="grip2"></i>
            <div class="combo c-lw"><i class="ln"></i><span class="mono">ByLayer</span></div>
            <i class="grip2"></i>
            <div class="combo c-plot off"><span class="mono">BYCOLOR</span></div>
        </div>
    </div>

    <div class="row">
        <div class="bar b-3d">
            <i class="grip"></i>
            <svg class="ic"><use href="#polys"/></svg><svg class="ic"><use href="#box"/></svg><svg class="ic"><use href="#wedge"/></svg><svg class="ic"><use href="#cone"/></svg><svg class="ic"><use href="#sphere"/></svg><svg class="ic"><use href="#cyl"/></svg><svg class="ic"><use href="#torus"/></svg><svg class="ic"><use href="#pyr"/></svg><svg class="ic"><use href="#helix"/></svg><svg class="ic"><use href="#planar"/></svg>
            <i class="sep"></i>
            <svg class="ic"><use href="#extr"/></svg><svg class="ic"><use href="#press"/></svg><svg class="ic"><use href="#sweep"/></svg><svg class="ic"><use href="#revo"/></svg><svg class="ic"><use href="#loft"/></svg>
            <i class="sep"></i>
            <svg class="ic"><use href="#uni"/></svg><svg class="ic"><use href="#sub"/></svg><svg class="ic"><use href="#int"/></svg>
            <i class="sep"></i>
            <svg class="ic"><use href="#gizmo"/></svg><svg class="ic"><use href="#rot3d"/></svg><svg class="ic"><use href="#align"/></svg><svg class="ic"><use href="#arr3d"/></svg>
        </div>
        <div class="bar b-edit">
            <i class="grip"></i>
            <svg class="ic"><use href="#uni"/></svg><svg class="ic"><use href="#sub"/></svg><svg class="ic"><use href="#int"/></svg>
            <i class="sep"></i>
            <svg class="ic"><use href="#extr"/></svg><svg class="ic"><use href="#fbox"/></svg><svg class="ic"><use href="#ftwin"/></svg><svg class="ic"><use href="#fdel"/></svg><svg class="ic"><use href="#frot"/></svg><svg class="ic"><use href="#ftap"/></svg><svg class="ic"><use href="#fcopy"/></svg><svg class="ic"><use href="#fcol"/></svg>
            <i class="sep"></i>
            <svg class="ic"><use href="#eshade"/></svg><svg class="ic"><use href="#eoff"/></svg><svg class="ic"><use href="#ecopy"/></svg><svg class="ic"><use href="#fcol"/></svg>
            <i class="sep"></i>
            <svg class="ic"><use href="#imprint"/></svg><svg class="ic"><use href="#clean"/></svg><svg class="ic"><use href="#sep3"/></svg><svg class="ic"><use href="#shell"/></svg><svg class="ic"><use href="#check"/></svg>
        </div>
        <div class="bar b-vis">
            <i class="grip"></i>
            <svg class="ic"><use href="#inter"/></svg>
            <i class="sep"></i>
            <svg class="ic"><use href="#wire"/></svg><svg class="ic"><use href="#hidden"/></svg><svg class="ic"><use href="#conc"/></svg><svg class="ic"><use href="#real"/></svg>
            <i class="sep"></i>
            <svg class="ic"><use href="#vsm"/></svg>
        </div>
    </div>

    <div class="row">
        <div class="bar b-view">
            <i class="grip"></i>
            <svg class="ic"><use href="#vw"/></svg>
            <i class="sep"></i>
            <svg class="ic"><use href="#c1"/></svg><svg class="ic"><use href="#c2"/></svg><svg class="ic"><use href="#c3"/></svg><svg class="ic"><use href="#c4"/></svg><svg class="ic"><use href="#c5"/></svg><svg class="ic"><use href="#c6"/></svg>
            <i class="sep"></i>
            <svg class="ic"><use href="#d1"/></svg><svg class="ic"><use href="#d2"/></svg><svg class="ic"><use href="#d3"/></svg><svg class="ic"><use href="#d4"/></svg>
            <i class="sep"></i>
            <svg class="ic"><use href="#cam"/></svg>
            <i class="sep"></i>
            <svg class="ic"><use href="#ucsb"/></svg>
            <div class="combo c-view off"></div>
        </div>
    </div>
</section>

<main class="main">
    <aside class="side-l">
        <div class="vbar">
            <i class="vgrip"></i>
            <svg class="ic"><use href="#line"/></svg><svg class="ic"><use href="#xline"/></svg><svg class="ic"><use href="#pline"/></svg><svg class="ic"><use href="#pgon"/></svg><svg class="ic"><use href="#rect"/></svg><svg class="ic"><use href="#arc"/></svg><svg class="ic"><use href="#circ"/></svg><svg class="ic"><use href="#cloud"/></svg><svg class="ic"><use href="#spline"/></svg><svg class="ic"><use href="#ell"/></svg><svg class="ic"><use href="#earc"/></svg><svg class="ic"><use href="#ins"/></svg><svg class="ic"><use href="#mkblk"/></svg><svg class="ic"><use href="#point"/></svg><svg class="ic"><use href="#hatch"/></svg><svg class="ic"><use href="#grad"/></svg><svg class="ic"><use href="#region"/></svg><svg class="ic"><use href="#table"/></svg>
            <span class="mtext">A</span>
            <svg class="ic"><use href="#addsel"/></svg>
        </div>
    </aside>

    <div class="view">
        <div class="view-top">
            <div class="canvas">
                <svg class="model" viewBox="31 156 1198 696">
                    <!-- back block -->
                    <polygon fill="#a8a8a8" points="695,378 871,335 871,522 826,532 826,443 767,412"/>
                    <polygon fill="#b8b8b8" points="543,297 642,218 663,209 809,223 819,278 597,332"/>
                    <polygon fill="#7c7c7c" points="809,223 853,239 871,335 819,278"/>
                    <polygon fill="#cccccc" points="597,332 819,278 871,335 695,378"/>
                    <!-- sides -->
                    <polygon fill="#9e9e9e" points="231,352 293,506 293,692 231,538"/>
                    <polygon fill="#989898" points="293,506 454,488 454,673 293,692"/>
                    <polygon fill="#a0a0a0" points="454,488 477,582 477,767 454,673"/>
                    <polygon fill="#949494" points="477,582 743,561 743,746 477,767"/>
                    <polygon fill="#909090" points="742,561 826,443 826,629 743,746 742,746"/>
                    <!-- top -->
                    <polygon fill="#b8b8b8" points="285,322 417,244 545,297 597,332 695,378 767,412 710,496 517,511 494,415 329,434"/>
                    <polygon fill="#dedede" points="231,352 285,322 329,434 293,506"/>
                    <polygon fill="#d8d8d8" points="329,434 494,415 454,488 293,506"/>
                    <polygon fill="#dcdcdc" points="494,415 517,511 477,582 454,488"/>
                    <polygon fill="#e0e0e0" points="517,511 710,496 743,561 477,582"/>
                    <polygon fill="#9c9c9c" points="710,496 767,412 826,443 743,561"/>

                    <!-- ucs icon -->
                    <path stroke="#1b4fa6" stroke-width="5" d="M81 803V762"/>
                    <path stroke="#c23030" stroke-width="5" d="M82 802l35-22"/>
                    <path stroke="#2cae2c" stroke-width="5" d="M80 802l-33-21"/>
                    <path fill="none" stroke="#2468d0" d="M81 745h12l-12 13h12"/>
                    <path fill="none" stroke="#12a012" d="M44 764l6.500 6.500 6.500-6.500M50.500 770.500V777"/>
                    <path fill="none" stroke="#c02828" d="M113 764l13 13M126 764l-13 13"/>

                    <!-- viewcube -->
                    <ellipse cx="1148" cy="262" rx="55.500" ry="34.500" fill="none" stroke="#41464e" stroke-width="13"/>
                    <text class="vc-n" x="1108" y="240" transform="rotate(-30 1108 235)">北</text>
                    <text class="vc-n" x="1189" y="240" transform="rotate(30 1189 235)">东</text>
                    <text class="vc-s" x="1103" y="293" transform="rotate(-30 1103 288)">西</text>
                    <text class="vc-s" x="1193" y="294" transform="rotate(30 1193 289)">南</text>
                    <polygon fill="#a9adb1" points="1148,199 1182,217 1148,235 1114,217"/>
                    <polygon fill="url(#gcube)" points="1114,217 1148,235 1148,275 1117,255"/>
                    <polygon fill="url(#gcube)" points="1148,235 1182,217 1180,255 1148,275"/>
                    <polyline fill="none" stroke="#60646a" points="1114,217 1148,235 1182,217"/>
                    <path stroke="#60646a" d="M1148 235v40"/>
                    <text class="vc-f" transform="matrix(.87 -.5 .87 .5 1147 221)">上</text>
                    <text class="vc-f" transform="matrix(.87 .5 0 1 1130 256)">左</text>
                    <text class="vc-f" transform="matrix(.87 -.5 0 1 1165 253)">前</text>
                </svg>
                <div class="vp-label">[−][西南等轴测][真实]</div>
                <div class="vc-btn">未命名 ▽</div>
            </div>
            <div class="vscroll">
                <i class="a-up"></i>
                <i class="thumb vt"></i>
                <i class="a-dn"></i>
            </div>
        </div>
        <div class="tabs">
            <div class="nav"><i class="n1"></i><i class="n2"></i><i class="n3"></i><i class="n4"></i></div>
            <span class="tab on">模型</span><span class="tab">布局1</span><span class="tab">布局2</span>
            <div class="hscroll"><i class="h-grip"></i><i class="a-l"></i><i class="thumb ht"></i><i class="a-r"></i></div>
        </div>
    </div>

    <aside class="side-r">
        <div class="vbar">
            <i class="vgrip"></i>
            <svg class="ic"><use href="#erase"/></svg><svg class="ic"><use href="#mcopy"/></svg><svg class="ic"><use href="#mirror"/></svg><svg class="ic"><use href="#offs"/></svg><svg class="ic"><use href="#marr"/></svg><svg class="ic"><use href="#move"/></svg><svg class="ic"><use href="#rot"/></svg><svg class="ic"><use href="#scale"/></svg><svg class="ic"><use href="#stretch"/></svg><svg class="ic"><use href="#trim"/></svg><svg class="ic"><use href="#ext2"/></svg><svg class="ic"><use href="#brkp"/></svg><svg class="ic"><use href="#brk"/></svg><svg class="ic"><use href="#join"/></svg><svg class="ic"><use href="#cham"/></svg><svg class="ic"><use href="#fillet"/></svg><svg class="ic"><use href="#blend"/></svg><svg class="ic"><use href="#explode"/></svg>
        </div>
        <div class="vbar second">
            <i class="vgrip"></i>
            <svg class="ic"><use href="#ord1"/></svg><svg class="ic"><use href="#ord2"/></svg><svg class="ic"><use href="#ord3"/></svg><svg class="ic"><use href="#ord4"/></svg>
            <i class="hsep"></i>
            <svg class="ic"><use href="#abc"/></svg><svg class="ic"><use href="#ras"/></svg>
        </div>
    </aside>
</main>

<div class="dim-row">
    <div class="bar b-dim">
        <i class="grip"></i>
        <svg class="ic"><use href="#dl"/></svg><svg class="ic"><use href="#dal"/></svg><svg class="ic"><use href="#dar"/></svg><svg class="ic"><use href="#dor"/></svg>
        <i class="sep"></i>
        <svg class="ic"><use href="#drad"/></svg><svg class="ic"><use href="#djog"/></svg><svg class="ic"><use href="#ddia"/></svg><svg class="ic"><use href="#dang"/></svg>
        <i class="sep"></i>
        <svg class="ic"><use href="#dqk"/></svg><svg class="ic"><use href="#dbase"/></svg><svg class="ic"><use href="#dcont"/></svg><svg class="ic"><use href="#dsp"/></svg><svg class="ic"><use href="#dbrk"/></svg>
        <i class="sep"></i>
        <svg class="ic"><use href="#tol"/></svg><svg class="ic"><use href="#cen"/></svg><svg class="ic"><use href="#ins2"/></svg><svg class="ic"><use href="#jline"/></svg>
        <i class="sep"></i>
        <svg class="ic"><use href="#ded"/></svg><svg class="ic"><use href="#dtxt"/></svg><svg class="ic"><use href="#dupd"/></svg>
        <i class="sep"></i>
        <div class="combo c-118 ctr"><span>ISO-25</span></div>
        <svg class="ic"><use href="#dimst"/></svg>
    </div>
</div>

<section class="cmd">
    <div class="cmd-side">
        <i class="cmd-grip"></i>
        <b class="cmd-x">X</b>
        <svg class="wrench" viewBox="0 0 18 18"><path fill="#eee" d="M2 15l7-7c-1-3 1-6 5-6l-2 3 1 2 2 1 3-2c0 4-3 6-6 5l-7 7z"/></svg>
    </div>
    <div class="cmd-body">
        <div class="cmd-log">
            <p>选择同一个面上的其他边或<span class="lat"> [</span>环<span class="lat">(L)/</span>距离<span class="lat">(D)]:</span></p>
            <p>按<span class="lat"> Enter </span>键接受倒角或<span class="lat"> [</span>距离<span class="lat">(D)]:</span></p>
        </div>
        <div class="cmd-input">
            <span class="prompt">&gt;_</span><i class="dd gr"></i>
            <span class="hint">键入命令</span>
        </div>
    </div>
</section>

<footer class="status">
    <div class="coords">7018.3871, -502.6367, 0.0000</div>
    <div class="st-group">
        <span class="st"><svg class="ic"><use href="#sinf"/></svg></span><span class="st"><svg class="ic"><use href="#ssnap"/></svg></span><span class="st"><svg class="ic"><use href="#sgrid"/></svg></span><span class="st"><svg class="ic"><use href="#sortho"/></svg></span><span class="st"><svg class="ic"><use href="#spol"/></svg></span><span class="st on"><svg class="ic"><use href="#sos"/></svg></span><span class="st"><svg class="ic"><use href="#s3d"/></svg></span><span class="st on"><svg class="ic"><use href="#sotr"/></svg></span><span class="st"><svg class="ic"><use href="#sdyn"/></svg></span><span class="st"><svg class="ic"><use href="#sdu"/></svg></span><span class="st"><svg class="ic"><use href="#sdyn2"/></svg></span><span class="st"><svg class="ic"><use href="#slw"/></svg></span><span class="st"><svg class="ic"><use href="#stp"/></svg></span><span class="st"><svg class="ic"><use href="#ssel"/></svg></span><span class="st"><svg class="ic"><use href="#scross"/></svg></span>
    </div>
    <div class="st-right">
        <span class="st wide">模型</span><span class="st"><svg class="ic"><use href="#slay"/></svg></span><span class="st"><svg class="ic"><use href="#stwin"/></svg></span>
        <span class="st blank"></span>
        <span class="st scale"><svg class="ic"><use href="#anno"/></svg>1:1<i class="dd dk"></i></span><span class="st"><svg class="ic"><use href="#anno2"/></svg></span><span class="st"><svg class="ic"><use href="#anno3"/></svg></span>
        <span class="st-gap"></span>
        <span class="st"><svg class="ic"><use href="#gear"/></svg></span><span class="st"><svg class="ic"><use href="#lock"/></svg></span><span class="st"><svg class="ic"><use href="#hw"/></svg></span><span class="st bulb"><svg class="ic"><use href="#bulb"/></svg></span>
        <span class="st-dd"><i class="dd dk"></i></span>
        <span class="st"><svg class="ic"><use href="#cleanscr"/></svg></span>
    </div>
</footer>

<div class="watermark">
    <svg viewBox="0 0 240 120" width="240" height="120">
        <g class="wm">
            <ellipse cx="89" cy="29" rx="9" ry="13" transform="rotate(-15 89 29)"/>
            <ellipse cx="105" cy="14" rx="7" ry="11"/>
            <ellipse cx="126" cy="17" rx="8" ry="11" transform="rotate(8 126 17)"/>
            <ellipse cx="139" cy="34" rx="8" ry="11" transform="rotate(25 139 34)"/>
            <path d="M113 34c10 0 15 10 22 16 8 7 8 25-8 25-6 0-10-2-14-2s-8 2-15 2c-15 0-14-18-6-25 7-6 11-16 21-16z"/>
            <text class="wm-lat" x="2" y="73">Bai</text>
            <text class="wm-zh" x="149" y="72">经验</text>
            <text class="wm-url" x="3" y="107">jingyan.baidu.com</text>
        </g>
        <text class="wm-du" x="97" y="69">du</text>
    </svg>
</div>
</body>
</html>
```

FILE: styles.css
```css
* { box-sizing: border-box; }
html, body { margin: 0; padding: 0; }
body {
    width: 1280px;
    height: 984px;
    overflow: hidden;
    position: relative;
    background-color: #626262;
    font-family: "Noto Sans", "Noto Sans CJK SC", sans-serif;
    font-size: 12px;
    color: #222;
}
.sprite { position: absolute; }
i, b { font-style: normal; display: block; flex: none; }

/* icons */
.ic {
    width: 18px;
    height: 18px;
    margin: 0 2.5px;
    flex: none;
    fill: none;
    stroke: #333;
    stroke-width: 1;
    overflow: visible;
}
.mini { width: 15px; height: 15px; fill: none; stroke: #333; flex: none; }
.dd {
    width: 12px;
    height: 0;
    position: relative;
}
.dd::after {
    content: "";
    position: absolute;
    left: 3px;
    top: -2px;
    border: 3px solid transparent;
    border-top: 4px solid #3c3c3c;
}
.dd.dk::after { border-top-color: #777; }
.dd.gr::after { border-top-color: #999; }

/* title + menu */
.head { display: flex; height: 44px; background-color: #666; }
.app-btn {
    width: 40px;
    height: 41px;
    background: linear-gradient(#8c8c8c, #a9a9a9 60%, #777);
    border-right: 1px solid #333;
    border-bottom: 1px solid #333;
    flex: none;
}
.logo { width: 40px; height: 40px; display: block; }
.head-main { flex: 1; min-width: 0; }
.title {
    height: 24px;
    display: flex;
    align-items: center;
    background: linear-gradient(#8d8d8d, #7a7a7a 60%, #6e6e6e);
    border-bottom: 1px solid #3b3b3b;
}
.title .ic { margin: 0 2.85px; }
.title .ic.first { margin-left: 9px; }
.title .dd { width: 12.5px; }
.t-combo {
    width: 179px;
    height: 22px;
    background: linear-gradient(#f8f8f8, #d9d9d9);
    border-radius: 2px;
    padding-left: 3px;
    gap: 1px;
    font-size: 12px;
    letter-spacing: .2px;
}
.t-combo .mini { width: 16px; height: 16px; }
.t-more {
    width: 16px;
    height: 24px;
    position: relative;
    background-color: #7c7c7c;
}
.t-more::after {
    content: "";
    position: absolute;
    left: 4px;
    top: 8px;
    width: 8px;
    height: 2px;
    background-color: #111;
}
.t-more::before {
    content: "";
    position: absolute;
    left: 4px;
    top: 12px;
    border: 4px solid transparent;
    border-top: 5px solid #111;
}
.banner {
    width: 247px;
    height: 24px;
    line-height: 24px;
    flex: none;
    font-size: 12px;
    color: #1f2a38;
    background:
        radial-gradient(60px 14px at 12px 22px, rgba(210,50,40,.45), transparent),
        radial-gradient(100px 16px at 120px 24px, #f2fafe, transparent),
        radial-gradient(70px 14px at 200px 24px, #eaf6fd, transparent),
        linear-gradient(#2a78c8, #7dbde9 50%, #d5ebf9);
}
.b-app { margin-left: 31px; }
.b-doc { margin-left: 18px; }
.t-play {
    width: 13px;
    height: 24px;
    position: relative;
    background-color: #7a7a7a;
}
.t-play::after {
    content: "";
    position: absolute;
    left: 3px;
    top: 7px;
    border: 5px solid transparent;
    border-left: 6px solid #111;
}
.search {
    width: 178px;
    height: 23px;
    line-height: 24px;
    flex: none;
    background-color: #fff;
    padding-left: 1px;
    font-style: italic;
    font-size: 11.5px;
    color: #8b8b8b;
}
.bino, .user, .xap, .qm { width: 19px; height: 19px; flex: none; }
.bino { margin-left: 5px; }
.user { margin-left: 4px; }
.login { color: #f2f2f2; font-size: 12px; margin-left: 5px; width: 26px; }
.dd-a { margin-left: 52.5px; }
.xap { margin-left: 5px; }
.ex { width: 19px; height: 19px; margin: 0 3px 0 5px; flex: none; }
.t-sep { width: 13px; flex: none; }
.qm { margin-left: 0; }
.glass {
    flex: 1;
    height: 24px;
    padding-left: 18px;
    margin-left: 1px;
    background: linear-gradient(100deg, #3c6f9e, #86acc9 40%, #4f80aa 70%, #7da3c0);
}
.win {
    display: flex;
    height: 18px;
    border: 1px solid #d5dee6;
    border-top: 0;
    border-radius: 0 0 4px 4px;
    background-color: rgba(80,90,100,.55);
}
.win b { height: 17px; color: #fff; position: relative; border-right: 1px solid #d5dee6; }
.w-min { width: 29px; }
.w-min::after { content: ""; position: absolute; left: 10px; top: 9px; width: 9px; height: 3px; background-color: #eee; }
.w-res { width: 25px; }
.w-res::after { content: ""; position: absolute; left: 8px; top: 3px; width: 9px; height: 9px; border: 2px solid #eee; }
.w-x {
    flex: 1;
    text-align: center;
    font: 700 13px/17px "Liberation Sans", sans-serif;
    border-right: 0 !important;
}
.menu {
    height: 20px;
    display: flex;
    align-items: center;
    gap: 25px;
    padding-left: 15px;
    background: linear-gradient(#8a8a8a, #6f6f6f 55%, #5c5c5c);
    color: #e9e9e9;
    font-size: 12px;
    position: relative;
}
.menu a { white-space: nowrap; }
.doc-ctl {
    margin-left: auto;
    margin-right: 6px;
    display: flex;
    align-items: center;
    gap: 6.5px;
}
.d-min { width: 10px; height: 3px; margin-top: 8px; background-color: #222; }
.d-res { width: 11px; height: 11px; border: 1px solid #222; }
.d-x { font: 700 12px/14px "Liberation Sans", sans-serif; color: #222; }

/* toolbars */
.docks { height: 111px; padding-top: 1px; }
.row { display: flex; height: 24px; margin-bottom: 3px; gap: 2px; padding-left: 2px; }
.bar {
    display: flex;
    align-items: center;
    height: 100%;
    background-color: #f0f0f0;
    border: 1px solid #3d3d3d;
    flex: none;
}
.grip {
    width: 6px;
    align-self: stretch;
    background: #4a4a4a radial-gradient(#bbb 0.7px, transparent 1px) 1px 0 / 3px 3px;
}
.grip2 {
    width: 7px;
    align-self: stretch;
    margin: 0 1px;
    border-left: 1px solid #999;
    border-right: 1px solid #999;
}
.sep {
    width: 6px;
    align-self: stretch;
    margin: 3px 0;
    background: linear-gradient(#888, #888) center / 1px 100% no-repeat;
}
.b-std { padding-right: 3px; }
.b-style .sep { width: 8px; }
.b-layer { padding-right: 8px; }
.b-props { padding-left: 1px; }
.combo {
    height: 22px;
    display: flex;
    align-items: center;
    flex: none;
    position: relative;
    background: linear-gradient(#f6f6f6, #d6d6d6);
    border: 1px solid #a0a0a0;
    border-radius: 3px;
    padding-left: 3px;
    font-size: 12px;
    letter-spacing: .25px;
    color: #222;
}
.combo::after {
    content: "";
    position: absolute;
    right: 2px;
    top: 7px;
    border: 4px solid transparent;
    border-top: 5px solid #111;
}
.combo.off { background: #efefef; color: #8f8f8f; }
.combo.off::after { border-top-color: #aaa; }
.c-118 { width: 118px; }
.ctr span { margin-left: 14px; }
.c-wsp { width: 173px; margin-left: 1px; padding-left: 7px; }
.c-layer { width: 299px; gap: 1px; padding-left: 3px; }
.c-layer .m-frz { margin-left: 3px; }
.c-layer .m-lock { margin-left: -2px; }
.c-layer .swatch { margin: 0 9px 0 0; }
.swatch { width: 10px; height: 10px; background-color: #fff; border: 1px solid #111; margin: 0 5px 0 1px; flex: none; }
.swatch.sm { width: 9px; height: 9px; margin-right: 3px; }
.mono { font-family: "DejaVu Serif", serif; font-size: 10px; letter-spacing: 0; }
.c-color { width: 147px; padding-left: 5px; }
.c-ltype { width: 157px; padding-left: 4px; }
.c-lw { width: 123px; padding-left: 4px; }
.c-plot { width: 118px; padding-left: 8px; }
.c-ltype .ln { width: 57px; height: 1px; background-color: #111; margin-right: 7px; }
.c-lw .ln { width: 35px; height: 1px; background-color: #111; margin-right: 4px; }
.c-view { width: 138px; margin-left: 1px; background: #fff; }

/* main area */
.main { display: flex; height: 711px; }
.side-l { width: 30px; flex: none; position: relative; }
.side-l .vbar { margin: 1px 0 0 1px; }
.vbar {
    width: 24px;
    display: flex;
    flex-direction: column;
    align-items: center;
    background-color: #ececec;
    border: 1px solid #3d3d3d;
}
.vbar .ic { height: 18px; margin: 2px 0; }
.vgrip {
    width: 100%;
    height: 5px;
    background: #4a4a4a radial-gradient(#bbb 0.7px, transparent 1px) 0 1px / 3px 3px;
}
.mtext {
    font: 700 20px/22px "Liberation Sans", sans-serif;
    color: #333;
    height: 22px;
}
.side-r { width: 33px; flex: none; padding: 1px 0 0 6px; }
.side-r .vbar:first-child .vgrip { height: 6px; }
.side-r .second .vgrip { height: 7px; }
.vbar.second { margin-top: 2px; }
.hsep { width: 20px; height: 1px; background-color: #999; margin: 2px 0 0; }

.view {
    width: 1217px;
    flex: none;
    display: flex;
    flex-direction: column;
    border: 1px solid #c8c8c8;
    border-bottom: 0;
}
.view-top { display: flex; height: 696px; }
.canvas {
    width: 1198px;
    height: 696px;
    position: relative;
    background-color: #202830;
    flex: none;
}
.model { width: 1198px; height: 696px; display: block; }
.model polygon { shape-rendering: crispEdges; }
.vp-label {
    position: absolute;
    left: 4px;
    top: 3px;
    font-size: 12px;
    letter-spacing: .12px;
    color: #d4d4d4;
}
.vc-n, .vc-s, .vc-f { font-family: "Noto Sans CJK SC", sans-serif; text-anchor: middle; }
.vc-n { font-size: 14px; fill: #a8acb0; }
.vc-s { font-size: 16px; fill: #b8bcc0; }
.vc-f { font-size: 21px; fill: #5f6368; }
.vc-btn {
    position: absolute;
    left: 1088px;
    top: 166px;
    width: 58px;
    height: 17px;
    border-radius: 3px;
    background-color: #7c8089;
    color: #50535a;
    font-size: 11px;
    line-height: 17px;
    text-align: center;
    letter-spacing: 1px;
}
.vscroll {
    flex: 1;
    background-color: #efefef;
    display: flex;
    flex-direction: column;
    align-items: center;
    height: 696px;
}
.a-up { margin-top: 6px; border: 4px solid transparent; border-bottom: 5px solid #555; border-top: 0; }
.a-dn { margin-top: auto; margin-bottom: 4px; border: 4px solid transparent; border-top: 5px solid #555; border-bottom: 0; }
.thumb {
    background: linear-gradient(#f5f5f5, #bdbdbd);
    border: 1px solid #a9a9a9;
    border-radius: 2px;
}
.vt { width: 15px; height: 15px; margin-top: 398px; }
.tabs {
    height: 14px;
    display: flex;
    align-items: stretch;
    background-color: #f4f4f4;
    position: relative;
    font-size: 12px;
    line-height: 14px;
}
.nav { width: 61px; display: flex; padding-left: 3px; gap: 4px; align-items: center; }
.nav i { width: 10px; height: 10px; border: 1px solid #bbb; background-color: #e8e8e8; position: relative; }
.nav i::after { content: ""; position: absolute; left: 1px; top: 1px; border: 3px solid transparent; }
.nav .n1::after, .nav .n2::after { border-right: 4px solid #444; border-left: 0; }
.nav .n3::after, .nav .n4::after { border-left: 4px solid #444; border-right: 0; }
.tab { width: 46px; padding-left: 6px; background: linear-gradient(#fff, #eaeaea); border-right: 1px solid #555; white-space: nowrap; color: #222; }
.tab.on {
    width: 38px;
    padding-left: 5px;
    background-color: #2a2a2a;
    background-image: none;
    color: #fff;
    clip-path: polygon(0 0, 100% 0, 92% 100%, 8% 100%);
}
.hscroll {
    margin-left: auto;
    width: 426px;
    height: 14px;
    display: flex;
    align-items: center;
    background: linear-gradient(#e8e8e8, #f2f2f2);
    position: relative;
}
.h-grip { width: 5px; height: 12px; margin-left: 0; border: 1px solid #aaa; border-radius: 2px; background-color: #fff; }
.a-l { margin-left: 6px; border: 4px solid transparent; border-right: 5px solid #444; border-left: 0; }
.ht { width: 15px; height: 13px; margin-left: 200px; }
.a-r { margin-left: 166px; border: 4px solid transparent; border-left: 5px solid #444; border-right: 0; }

/* dimension toolbar */
.dim-row { height: 39px; padding: 6px 0 0 28px; }
.b-dim { height: 25px; width: 642px; }
.b-dim .grip { margin-left: 3px; }
.b-dim .grip + .ic { margin-left: 2px; }

/* command line */
.cmd { height: 57px; display: flex; }
.cmd-side {
    width: 22px;
    flex: none;
    background-color: #3c3c3c;
    display: flex;
    flex-direction: column;
    align-items: center;
}
.cmd-grip {
    width: 18px;
    height: 6px;
    margin-top: 3px;
    background: radial-gradient(#999 0.8px, transparent 1px) 0 0 / 3px 3px;
}
.cmd-x { font: 700 13px/14px "Liberation Sans", sans-serif; color: #eee; margin-top: 6px; }
.wrench { width: 16px; height: 16px; margin-top: 9px; }
.cmd-body { flex: 1; display: flex; flex-direction: column; }
.cmd-log {
    height: 33px;
    background-color: #c3c3c3;
    border-bottom: 1px solid #777;
    padding: 1px 0 0 3px;
    font-family: "Liberation Mono", "Noto Sans CJK SC", monospace;
    font-size: 13px;
    letter-spacing: 1px;
    line-height: 15px;
    color: #111;
}
.cmd-log p { margin: 0; height: 15px; }
.lat { font: 12px/15px "Liberation Mono", monospace; letter-spacing: -.2px; white-space: pre; }
.cmd-input {
    height: 24px;
    background-color: #fff;
    border-bottom: 1px solid #333;
    display: flex;
    align-items: center;
    padding-left: 6px;
}
.prompt {
    width: 14px;
    height: 16px;
    background-color: #d6dce2;
    border: 1px solid #9aa3ab;
    font: 700 9px/14px "Liberation Mono", monospace;
    color: #222;
    text-align: center;
}
.hint { font-style: italic; color: #9d9d9d; margin-left: 6px; font-size: 12px; letter-spacing: 2px; }

/* status bar */
.status {
    height: 22px;
    display: flex;
    background: linear-gradient(90deg, #606060, #8f8f8f 70%, #777);
    position: relative;
}
.coords {
    width: 212px;
    flex: none;
    padding-left: 12px;
    font: 11px/24px "Liberation Mono", monospace;
    letter-spacing: -.6px;
    color: #8a8a8a;
    background: linear-gradient(#666, #6f6f6f);
}
.st-group, .st-right { display: flex; height: 22px; flex: none; }
.st {
    width: 22px;
    height: 22px;
    display: flex;
    align-items: center;
    justify-content: center;
    background: linear-gradient(#c8c8c8, #a4a4a4);
    border-left: 1px solid #666;
    flex: none;
    color: #111;
}
.st .ic { width: 16px; height: 16px; margin: 0; }
.st.on { background: linear-gradient(#cfe9f5, #86bfdc); }
.st-group { margin-right: auto; width: 330px; }
.st-right { margin-left: auto; }
.st.wide { width: 30px; font-size: 13px; }
.st.blank { width: 18px; background: #8c8c8c; }
.st.scale { width: 53px; gap: 1px; font-size: 12px; letter-spacing: 1px; }
.st-gap { width: 6px; }
.st.bulb { width: 34px; background: linear-gradient(#5f5f5f, #9a9a9a); }
.st-dd { width: 11px; display: flex; align-items: center; }

/* watermark over everything */
.watermark {
    position: absolute;
    left: 980px;
    top: 845px;
    width: 240px;
    height: 120px;
    pointer-events: none;
    filter: drop-shadow(0 0 1px rgba(0,0,0,.45));
}
.wm { fill: #fff; fill-opacity: .55; }
.wm-lat { font: 700 49px "Liberation Sans", sans-serif; }
.wm-zh { font: 700 38px "Noto Sans CJK SC", sans-serif; }
.wm-url { font: 400 27px "Lato", sans-serif; letter-spacing: .6px; }
.wm-du { font: 700 24px "Liberation Sans", sans-serif; fill: #777; fill-opacity: .75; }
```
